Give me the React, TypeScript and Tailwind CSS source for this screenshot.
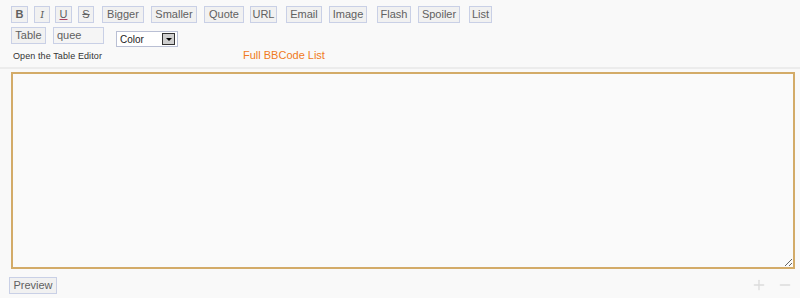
import { Minus, Plus } from 'lucide-react';

const font = { fontFamily: '"Liberation Sans", Arial, sans-serif' };

const btn =
  'flex h-[17px] shrink-0 items-center justify-center border border-[#c9d0e6] bg-[#f1f1f1] text-[11px] leading-none text-[#606060]';

const tools = [
  { label: 'B', cls: 'w-[17px] ml-0 font-bold text-[10px]' },
  { label: 'I', cls: 'w-[16px] ml-[6px] italic font-serif' },
  { label: 'U', cls: 'w-[17px] ml-[5px] underline decoration-[#b04060]' },
  { label: 'S', cls: 'w-[16px] ml-[6px] line-through' },
  { label: 'Bigger', cls: 'w-[42px] ml-[8px]' },
  { label: 'Smaller', cls: 'w-[46px] ml-[7px]' },
  { label: 'Quote', cls: 'w-[40px] ml-[7px]' },
  { label: 'URL', cls: 'w-[27px] ml-[6px]' },
  { label: 'Email', cls: 'w-[36px] ml-[9px]' },
  { label: 'Image', cls: 'w-[38px] ml-[7px]' },
  { label: 'Flash', cls: 'w-[34px] ml-[10px]' },
  { label: 'Spoiler', cls: 'w-[42px] ml-[7px]' },
  { label: 'List', cls: 'w-[23px] ml-[9px]' },
];

export default function App() {
  return (
    <div className="h-[298px] w-[800px] overflow-hidden bg-[#f9f9f9]" style={font}>
      <div className="pl-[11px] pt-[6px]">
        <div className="flex">
          {tools.map((t) => (
            <div key={t.label} className={`${btn} ${t.cls}`}>
              {t.label}
            </div>
          ))}
        </div>

        <div className="mt-[4px] flex items-start">
          <div className={`${btn} w-[35px]`}>Table</div>
          <div className={`${btn} ml-[7px] w-[51px] justify-start overflow-hidden bg-[#f5f5f5] pl-[3px]`}>quee</div>
          <div className="ml-[12px] mt-[4px] flex h-[16px] w-[62px] items-center justify-between border border-[#b9bfd4] bg-white pl-[3px] pr-[2px]">
            <span className="text-[10px] text-[#222]">Color</span>
            <span className="flex h-[12px] w-[13px] items-center justify-center border border-[#333] bg-[#cfcfcf]">
              <span className="h-0 w-0 border-x-[3px] border-t-[3px] border-x-transparent border-t-black" />
            </span>
          </div>
        </div>

        <div className="mt-[3px] flex items-center">
          <span className="ml-[2px] w-[230px] text-[9px] tracking-[0.1px] text-[#333]">Open the Table Editor</span>
          <span className="-mt-[3px] text-[11px] text-[#f07a22]">Full BBCode List</span>
        </div>
      </div>

      <div className="mt-[3px] h-[2px] bg-[#ececec]" />

      <div className="px-[11px] pt-[3px]">
        <textarea className="block h-[197px] w-[784px] resize border-2 border-[#d3ab68] bg-[#fafafa] outline-none" />
      </div>

      <div className="mt-[8px] flex items-center justify-between pl-[9px] pr-[7px]">
        <div className={`${btn} w-[48px]`}>Preview</div>
        <div className="flex items-center gap-[10px] text-[#dcdcdc]">
          <Plus size={16} strokeWidth={2} />
          <Minus size={16} strokeWidth={2} />
        </div>
      </div>
    </div>
  );
}
